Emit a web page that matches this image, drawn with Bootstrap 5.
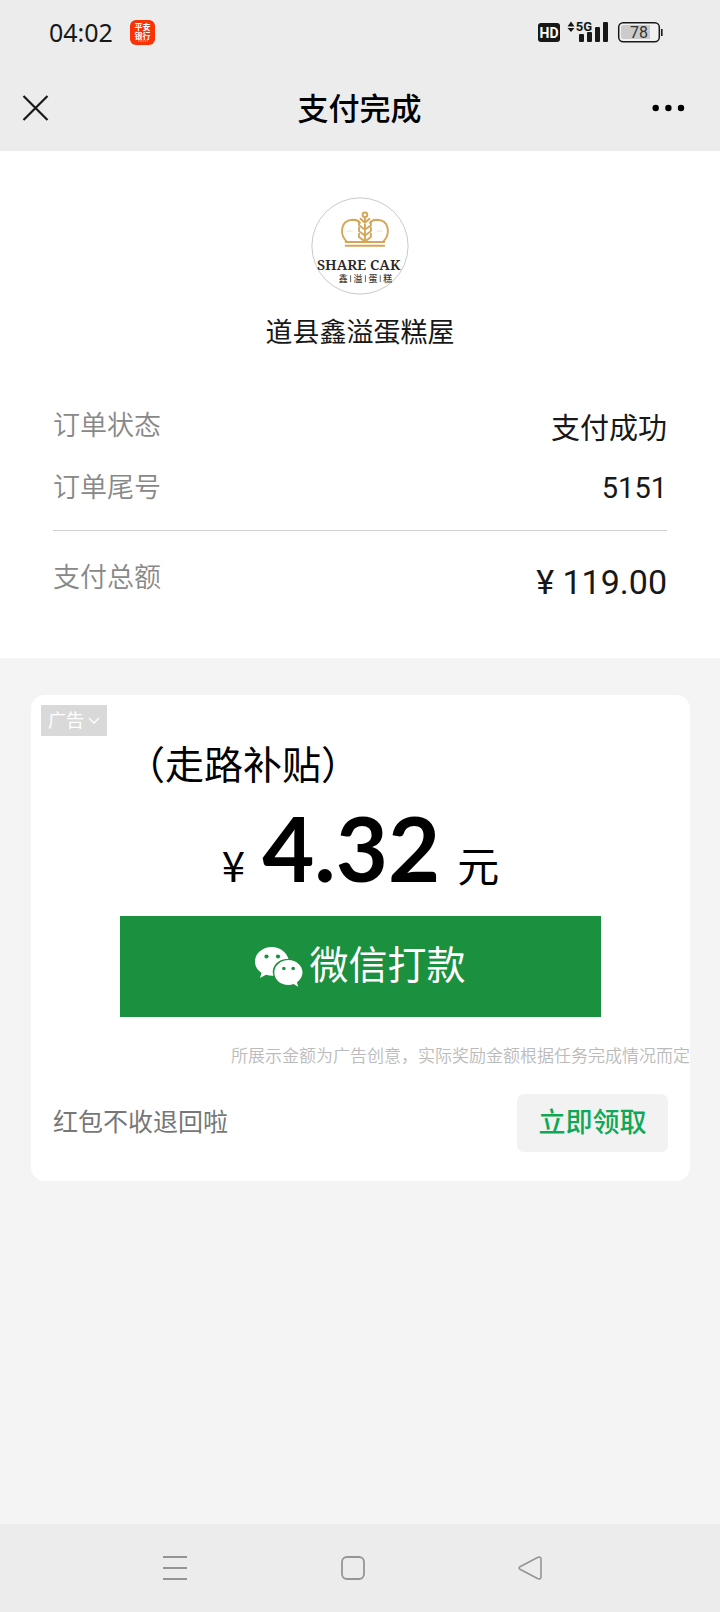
<!DOCTYPE html>
<html lang="zh-CN">
<head>
<meta charset="utf-8">
<meta name="viewport" content="width=device-width, initial-scale=1">
<title>支付完成</title>
<link href="https://cdn.jsdelivr.net/npm/bootstrap@5.3.0/dist/css/bootstrap.min.css" rel="stylesheet">
<style>
  body { background: #f4f4f4; color: #181818; font-family: Roboto, "Noto Sans CJK SC", sans-serif; }
  svg { display: block; flex: none; }
  .chrome { background: #ececec; }
  .status { height: 64px; padding: 0 56px 0 49px; gap: 17px; }
  .clock { font: 25px/32px "Noto Sans", sans-serif; }
  .titlebar { height: 87px; padding: 0 33px 0 20px; }
  .page-title { font-size: 31px; line-height: 40px; font-weight: 500; color: #000; padding: 4px 0 0 12px; }
  .receipt { padding: 46px 53px 56px; }
  .shop { font-size: 27px; line-height: 40px; margin: 18px 0 53px; }
  .line-item { height: 62px; line-height: 40px; }
  .line-item dt, .total-line dt { font-size: 27px; font-weight: 350; color: #888; }
  .line-item dd { font-size: 29px; }
  .line-item .in-words { line-height: 46px; }
  .total-line { border-top: 1px solid #d0d0d0; padding-top: 27px; line-height: 40px; }
  .total-line dd { font-size: 34px; padding-top: 4px; }
  .promo { margin: 37px 30px 0 31px; border-radius: 14px; padding: 10px 0 29px; }
  .ad-tag { background: #d9d9d9; color: #fff; font-size: 18px; line-height: 31px; height: 31px; padding: 0 7px 0 7px; margin-left: 10px; }
  .promo-name { font-size: 39px; line-height: 52px; color: #000; margin-left: 95px; font-family: "Noto Sans CJK SC", sans-serif; }
  .sum { color: #000; height: 128px; line-height: 118px; font-size: 42px; gap: 17px; font-family: "Noto Sans CJK SC", sans-serif; }
  .sum strong { font: 700 90px/118px Lato, sans-serif; }
  .pay { background: #1b903f; color: #fff; margin: 0 89px; height: 101px; font-size: 39px; border-radius: 0; gap: 6px; }
  .pay:hover { background: #177c36; color: #fff; }
  .fine { font-size: 17px; line-height: 26px; margin: 26px 0 25px; color: #bbb; font-weight: 350; }
  .promo-foot { padding: 0 22px; }
  .slogan { font-size: 25px; color: #777; }
  .claim { background: #f2f2f2; color: #10a858; font-size: 27px; font-weight: 500; height: 58px; width: 151px; border-radius: 7px; }
  .sysnav { height: 88px; padding: 0 178px 0 163px; }
</style>
</head>
<body class="d-flex flex-column min-vh-100">
<header class="chrome">
  <div class="status d-flex align-items-center">
    <span class="clock">04:02</span>
    <svg width="25" height="25" viewBox="0 0 25 25" aria-label="平安银行">
      <rect width="25" height="25" rx="6" fill="#fa3205"/>
      <g fill="#fff" font-family="'Noto Sans CJK SC',sans-serif" font-weight="700" font-size="8" text-anchor="middle"><text x="12.500" y="10">平安</text><text x="12.500" y="18.500">银行</text></g>
      <path d="M8 21h10" stroke="#fff" stroke-width="1" stroke-dasharray="1.500 .7" opacity=".6"/>
    </svg>
    <svg class="ms-auto" width="126" height="24" viewBox="0 0 126 24" aria-label="HD 5G 78%">
      <rect x="0" y="3" width="22" height="19" rx="3" fill="#181818"/>
      <text x="11" y="17.500" fill="#fff" font-family="Roboto" font-weight="700" font-size="14" text-anchor="middle">HD</text>
      <path d="M29.500 6.500 33 1.500l3.500 5zM29.500 8 33 12l3.500-4z" fill="#181818"/>
      <text x="46" y="11" fill="#181818" font-family="Roboto" font-weight="700" font-size="13" text-anchor="middle">5G</text>
      <g fill="#181818"><rect x="41" y="14" width="5" height="8" rx="1"/><rect x="49" y="12" width="5" height="10" rx="1"/><rect x="57" y="7" width="5" height="15" rx="1"/><rect x="65" y="2" width="5" height="20" rx="1"/></g>
      <rect x="80.700" y="2.700" width="40.600" height="19" rx="4.500" fill="#f2f2f2" stroke="#181818" stroke-width="1.500"/>
      <path d="M85 5h27v14H85a2 2 0 0 1-2-2V7a2 2 0 0 1 2-2z" fill="#cbcbcb"/>
      <path d="M123.800 9v7" stroke="#181818" stroke-width="1.600"/>
      <text x="101" y="17.800" fill="#333" font-family="Roboto" font-size="16" text-anchor="middle">78</text>
    </svg>
  </div>
  <div class="titlebar d-flex align-items-center">
    <div class="col d-flex"><button class="btn p-0 border-0" type="button" aria-label="关闭"><svg width="30" height="30" viewBox="0 0 30 30"><path d="M3.500 3 27.500 27M27.500 3 3.500 27" stroke="#181818" stroke-width="2.200"/></svg></button></div>
    <h1 class="page-title m-0">支付完成</h1>
    <div class="col d-flex justify-content-end"><button class="btn p-0 border-0" type="button" aria-label="更多"><svg width="36" height="30" viewBox="0 0 36 30"><circle cx="4.700" cy="15" r="3.200"/><circle cx="17.400" cy="15" r="3.200"/><circle cx="30" cy="15" r="3.200"/></svg></button></div>
  </div>
</header>
<main class="flex-grow-1">
  <section class="receipt bg-white">
    <svg class="mx-auto" width="98" height="98" viewBox="0 0 99 99" aria-label="SHARE CAKE 鑫溢蛋糕">
      <circle cx="49.500" cy="49.500" r="48.600" fill="#fff" stroke="#c8c8c8"/>
      <g fill="none" stroke="#d5a558" stroke-width="1.900" stroke-linecap="round">
        <path d="M36 45c-7-7-7-21.500 6.500-22 3 0 5.500 1 7 3M73 45c7-7 7-21.500-6.500-22-3 0-5.500 1-7 3M35 45.500h39M35 49.300h39"/>
        <circle cx="54.500" cy="18" r="2.400"/><path d="M54.500 21v24M50 22l4.500 4 4.500-4M48.500 25v3.500l6 4.500 6-4.500V25M48.500 31v3.500l6 4.500 6-4.500V31M48.500 37v3.500l6 4.500 6-4.500V37"/>
      </g>
      <path d="M36.500 34.500h6M66.500 34.500h6" stroke="#eddcc0" stroke-width="1.400" stroke-dasharray="1 .5"/>
      <text x="6" y="73.500" font-family="'Noto Serif','Liberation Serif',serif" font-weight="600" font-size="14.500" fill="#292929">SHARE CAK</text>
      <text x="28" y="86" font-family="'Noto Sans CJK SC',sans-serif" font-size="9" font-weight="500" fill="#333">鑫<tspan x="43">溢</tspan><tspan x="58">蛋</tspan><tspan x="73">糕</tspan></text>
      <path d="M40 79v7M55 79v7M70 79v7" stroke="#555" stroke-width=".9"/>
    </svg>
    <p class="shop text-center">道县鑫溢蛋糕屋</p>
    <dl class="m-0">
      <div class="line-item d-flex justify-content-between"><dt>订单状态</dt><dd class="in-words m-0">支付成功</dd></div>
      <div class="line-item d-flex justify-content-between"><dt>订单尾号</dt><dd class="m-0">5151</dd></div>
      <div class="total-line d-flex justify-content-between"><dt>支付总额</dt><dd class="m-0">¥ 119.00</dd></div>
    </dl>
  </section>
  <section class="promo bg-white">
    <button type="button" class="ad-tag btn rounded-0 border-0 d-flex align-items-center gap-1">广告<svg width="12" height="8" viewBox="0 0 12 8"><path d="M1 1l5 5 5-5" fill="none" stroke="#fff" stroke-width="1.300"/></svg></button>
    <p class="promo-name mb-0">（走路补贴）</p>
    <p class="sum d-flex justify-content-center align-items-baseline mb-0"><span>¥</span><strong>4.32</strong><span>元</span></p>
    <div class="d-grid"><button type="button" class="pay btn border-0 d-flex align-items-center justify-content-center p-0">
      <svg width="48" height="40" viewBox="0 0 48 40"><path fill="#fff" d="M17 0C7.500 0 0 6.300 0 14.500c0 4.800 2.500 8.500 6.500 11.300L5 31l6-3.200c2.500.7 4.700 1.100 7.500 1-3-9.500 5-17.300 15-16.800C31.500 5 25 0 17 0z"/><path fill="#fff" d="M47.500 25.500C47.500 18.500 41 13 33.500 13S19.300 18.500 19.300 25.500 25.500 38 33.500 38c1.700 0 3.500-.4 5-.9l4.700 2.700-1.300-4.400c3.400-2.600 5.600-5.900 5.600-9.900z"/><g fill="#1b903f"><circle cx="11.500" cy="9.500" r="2.100"/><circle cx="23" cy="9.500" r="2.100"/><circle cx="28.800" cy="21.500" r="1.800"/><circle cx="38.200" cy="21.500" r="1.800"/></g></svg>
      <span>微信打款</span></button></div>
    <p class="fine text-end">所展示金额为广告创意，实际奖励金额根据任务完成情况而定</p>
    <div class="promo-foot d-flex align-items-center justify-content-between">
      <span class="slogan">红包不收退回啦</span>
      <button type="button" class="claim btn border-0 p-0">立即领取</button>
    </div>
  </section>
</main>
<nav class="sysnav chrome d-flex align-items-center justify-content-between" aria-label="系统导航">
  <button class="btn p-0 border-0" type="button" aria-label="最近任务"><svg width="24" height="26" viewBox="0 0 24 26"><path d="M0 2h24M0 13h24M0 24h24" stroke="#959595" stroke-width="2"/></svg></button>
  <button class="btn p-0 border-0" type="button" aria-label="主屏幕"><svg width="24" height="24" viewBox="0 0 24 24"><rect x="1" y="1" width="22" height="22" rx="5" fill="none" stroke="#959595" stroke-width="1.800"/></svg></button>
  <button class="btn p-0 border-0" type="button" aria-label="返回"><svg width="24" height="24" viewBox="0 0 24 24"><path d="M2 10.700 19.500 1.500Q22.800.2 23 3v18q-.2 2.800-3.500 1.500L2 13.300Q0 12 2 10.700z" fill="none" stroke="#959595" stroke-width="1.600"/></svg></button>
</nav>
<script src="https://cdn.jsdelivr.net/npm/bootstrap@5.3.0/dist/js/bootstrap.bundle.min.js"></script>
</body>
</html>
